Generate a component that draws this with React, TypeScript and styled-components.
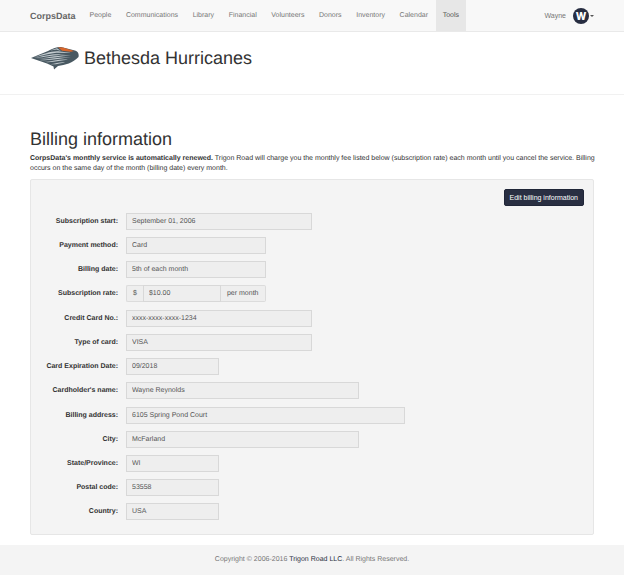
import React from "react";
import styled, { createGlobalStyle } from "styled-components";

const GlobalStyle = createGlobalStyle`
  *, *::before, *::after { box-sizing: border-box; }
  body {
    margin: 0;
    background: #fff;
    color: #333;
    font-family: "Liberation Sans", Arial, sans-serif;
    font-size: 7px;
    line-height: 10px;
    text-rendering: geometricPrecision;
  }
  #root { min-height: 100vh; display: flex; }
`;

const Page = styled.div`
  flex: 1;
  min-height: 100vh;
  display: flex;
  flex-direction: column;
`;

const NavBar = styled.nav`
  display: flex;
  align-items: stretch;
  height: 32px;
  padding: 0 30px;
  background: #f8f8f8;
  border-bottom: 1px solid #e9e9e9;
`;

const Brand = styled.a`
  display: flex;
  align-items: center;
  margin-right: 7px;
  color: #666;
  font-size: 9px;
  font-weight: bold;
  text-decoration: none;
`;

const NavLinks = styled.div`
  display: flex;
  flex: 0 0 68%;
  justify-content: space-between;
`;

const NavLink = styled.a<{ $active?: boolean }>`
  display: flex;
  align-items: center;
  padding: 0 7px;
  color: ${(p) => (p.$active ? "#555" : "#777")};
  background: ${(p) => (p.$active ? "#e7e7e7" : "transparent")};
  text-decoration: none;
`;

const UserMenu = styled.button`
  display: flex;
  align-items: center;
  margin-left: auto;
  padding: 0;
  border: 0;
  background: none;
  color: #777;
  font: inherit;
`;

const Avatar = styled.span`
  display: flex;
  align-items: center;
  justify-content: center;
  width: 16px;
  height: 16px;
  margin-left: 7px;
  border-radius: 50%;
  background: #272d41;
  color: #fff;
  font-family: Inter, "Liberation Sans", sans-serif;
  font-size: 10px;
  font-weight: 800;
`;

const Caret = styled.span`
  margin-left: 1px;
  border: 2px solid transparent;
  border-top-color: #555;
  border-bottom: 0;
`;

const Masthead = styled.header`
  display: flex;
  align-items: center;
  gap: 5px;
  height: 63px;
  padding: 0 30px 10px;
  border-bottom: 1px solid #f1f1f1;
`;

const Heading = styled.h1`
  margin: 0;
  font-size: 18px;
  font-weight: normal;
  line-height: 20px;
`;

const Content = styled.main`
  flex: 1;
  padding: 34px 30px 10px;
`;

const Intro = styled.p`
  margin: 5px -6px 5px 0;
`;

const Panel = styled.section`
  padding: 9px 2px 14px;
  background: #f4f4f4;
  border: 1px solid #e6e6e6;
  border-radius: 2px;
`;

const Actions = styled.div`
  display: flex;
  justify-content: flex-end;
  padding-right: 7px;
  margin-bottom: 7px;
`;

const EditButton = styled.button`
  height: 17px;
  padding: 0 5px;
  border: 1px solid #202638;
  border-radius: 2px;
  background: #292f42;
  color: #fff;
  font: inherit;
`;

const Form = styled.form`
  display: flex;
  flex-direction: column;
  gap: 8px;
`;

const Group = styled.div`
  display: flex;
  flex-direction: column;
  gap: 7px;
`;

const Row = styled.div`
  display: grid;
  grid-template-columns: repeat(12, minmax(0, 1fr));
  align-items: center;
`;

const Label = styled.label`
  grid-column: span 2;
  padding-right: 8px;
  font-weight: bold;
  text-align: right;
  white-space: nowrap;
`;

const Control = styled.div<{ $span: number }>`
  grid-column: span ${(p) => p.$span};
  display: flex;
`;

const Input = styled.input`
  flex: 1;
  min-width: 0;
  height: 17px;
  padding: 0 5px;
  border: 1px solid #d8d8d8;
  border-radius: 0;
  background: #eee;
  color: #555;
  font: inherit;
  text-rendering: inherit;
  outline: 0;
`;

const Addon = styled.span<{ $side: "left" | "right" }>`
  display: flex;
  align-items: center;
  padding: 0 6px;
  border: 1px solid #dcdcdc;
  border-${(p) => (p.$side === "left" ? "right" : "left")}: 0;
  border-radius: ${(p) => (p.$side === "left" ? "2px 0 0 2px" : "0 2px 2px 0")};
  background: #eee;
  color: #555;
`;

const Footer = styled.footer`
  padding: 10px 30px;
  background: #f4f4f4;
  color: #777;
  text-align: center;
`;

const FooterLink = styled.a`
  color: #292f42;
  text-decoration: none;
`;

const Logo = () => (
  <svg width="49" height="24" viewBox="0 0 49 24" role="img" aria-label="Bethesda Hurricanes logo">
    <path d="M1 12 L18 5 Q26 0.5 31 1 L45 4.5 Q49.5 6 48.5 11 C43 17 35 19 28 20 L24 23.5 L23.5 20.5 L17 17.5 Z" fill="#485861" />
    <path d="M28 1.2 L33 1.5 L44 5 L41 5.8 L32 4.8 Z" fill="#d9662b" />
    <g fill="#c3cbcf">
      <path d="M4 11.3 C14 8 22 4.5 30 5.5 L42 7 L30 6.8 C22 6.6 14 9.5 4 11.3 Z" />
      <path d="M4 12 C16 9.6 24 7 36 8.8 C25 8.6 16 11.2 4 12 Z" />
      <path d="M6 12.8 C18 11.8 27 8.8 41 9.6 C30 10.4 19 13 6 12.8 Z" />
      <path d="M9 14 C20 13.5 29 10.8 41 11.6 C31 12.2 21 15 9 14 Z" />
      <path d="M14 16 C23 15.6 30 12.8 38 13.8 C31 14.2 24 16.8 14 16 Z" />
      <path d="M20 18.2 C26 17.8 30 15.8 35 16.4 C31 16.8 26 18.9 20 18.2 Z" />
      <path d="M20 4.5 L27 2.3 L31 5 L26.5 3.4 Z" />
    </g>
  </svg>
);

const links = ["People", "Communications", "Library", "Financial", "Volunteers", "Donors", "Inventory", "Calendar", "Tools"];

type Field = { id: string; label: string; value: string; span: number; before?: string; after?: string };

const groups: Field[][] = [
  [
    { id: "start", label: "Subscription start:", value: "September 01, 2006", span: 4 },
    { id: "method", label: "Payment method:", value: "Card", span: 3 },
    { id: "date", label: "Billing date:", value: "5th of each month", span: 3 },
    { id: "rate", label: "Subscription rate:", value: "$10.00", span: 3, before: "$", after: "per month" },
  ],
  [
    { id: "number", label: "Credit Card No.:", value: "xxxx-xxxx-xxxx-1234", span: 4 },
    { id: "type", label: "Type of card:", value: "VISA", span: 4 },
    { id: "expiry", label: "Card Expiration Date:", value: "09/2018", span: 2 },
    { id: "name", label: "Cardholder's name:", value: "Wayne Reynolds", span: 5 },
  ],
  [
    { id: "address", label: "Billing address:", value: "6105 Spring Pond Court", span: 6 },
    { id: "city", label: "City:", value: "McFarland", span: 5 },
    { id: "state", label: "State/Province:", value: "WI", span: 2 },
    { id: "postal", label: "Postal code:", value: "53558", span: 2 },
    { id: "country", label: "Country:", value: "USA", span: 2 },
  ],
];

export default function App() {
  return (
    <Page>
      <GlobalStyle />
      <NavBar>
        <Brand href="#">CorpsData</Brand>
        <NavLinks>
          {links.map((name) => (
            <NavLink key={name} href="#" $active={name === "Tools"}>
              {name}
            </NavLink>
          ))}
        </NavLinks>
        <UserMenu type="button">
          Wayne
          <Avatar>W</Avatar>
          <Caret />
        </UserMenu>
      </NavBar>
      <Masthead>
        <Logo />
        <Heading>Bethesda Hurricanes</Heading>
      </Masthead>
      <Content>
        <Heading as="h2">Billing information</Heading>
        <Intro>
          <strong>CorpsData's monthly service is automatically renewed.</strong> Trigon Road will charge you the monthly
          fee listed below (subscription rate) each month until you cancel the service. Billing occurs on the same day of
          the month (billing date) every month.
        </Intro>
        <Panel>
          <Actions>
            <EditButton type="button">Edit billing information</EditButton>
          </Actions>
          <Form>
            {groups.map((fields) => (
              <Group key={fields[0].id}>
                {fields.map((f) => (
                  <Row key={f.id}>
                    <Label htmlFor={f.id}>{f.label}</Label>
                    <Control $span={f.span}>
                      {f.before && <Addon $side="left">{f.before}</Addon>}
                      <Input id={f.id} value={f.value} readOnly />
                      {f.after && <Addon $side="right">{f.after}</Addon>}
                    </Control>
                  </Row>
                ))}
              </Group>
            ))}
          </Form>
        </Panel>
      </Content>
      <Footer>
        Copyright © 2006-2016 <FooterLink href="#">Trigon Road LLC</FooterLink>. All Rights Reserved.
      </Footer>
    </Page>
  );
}
